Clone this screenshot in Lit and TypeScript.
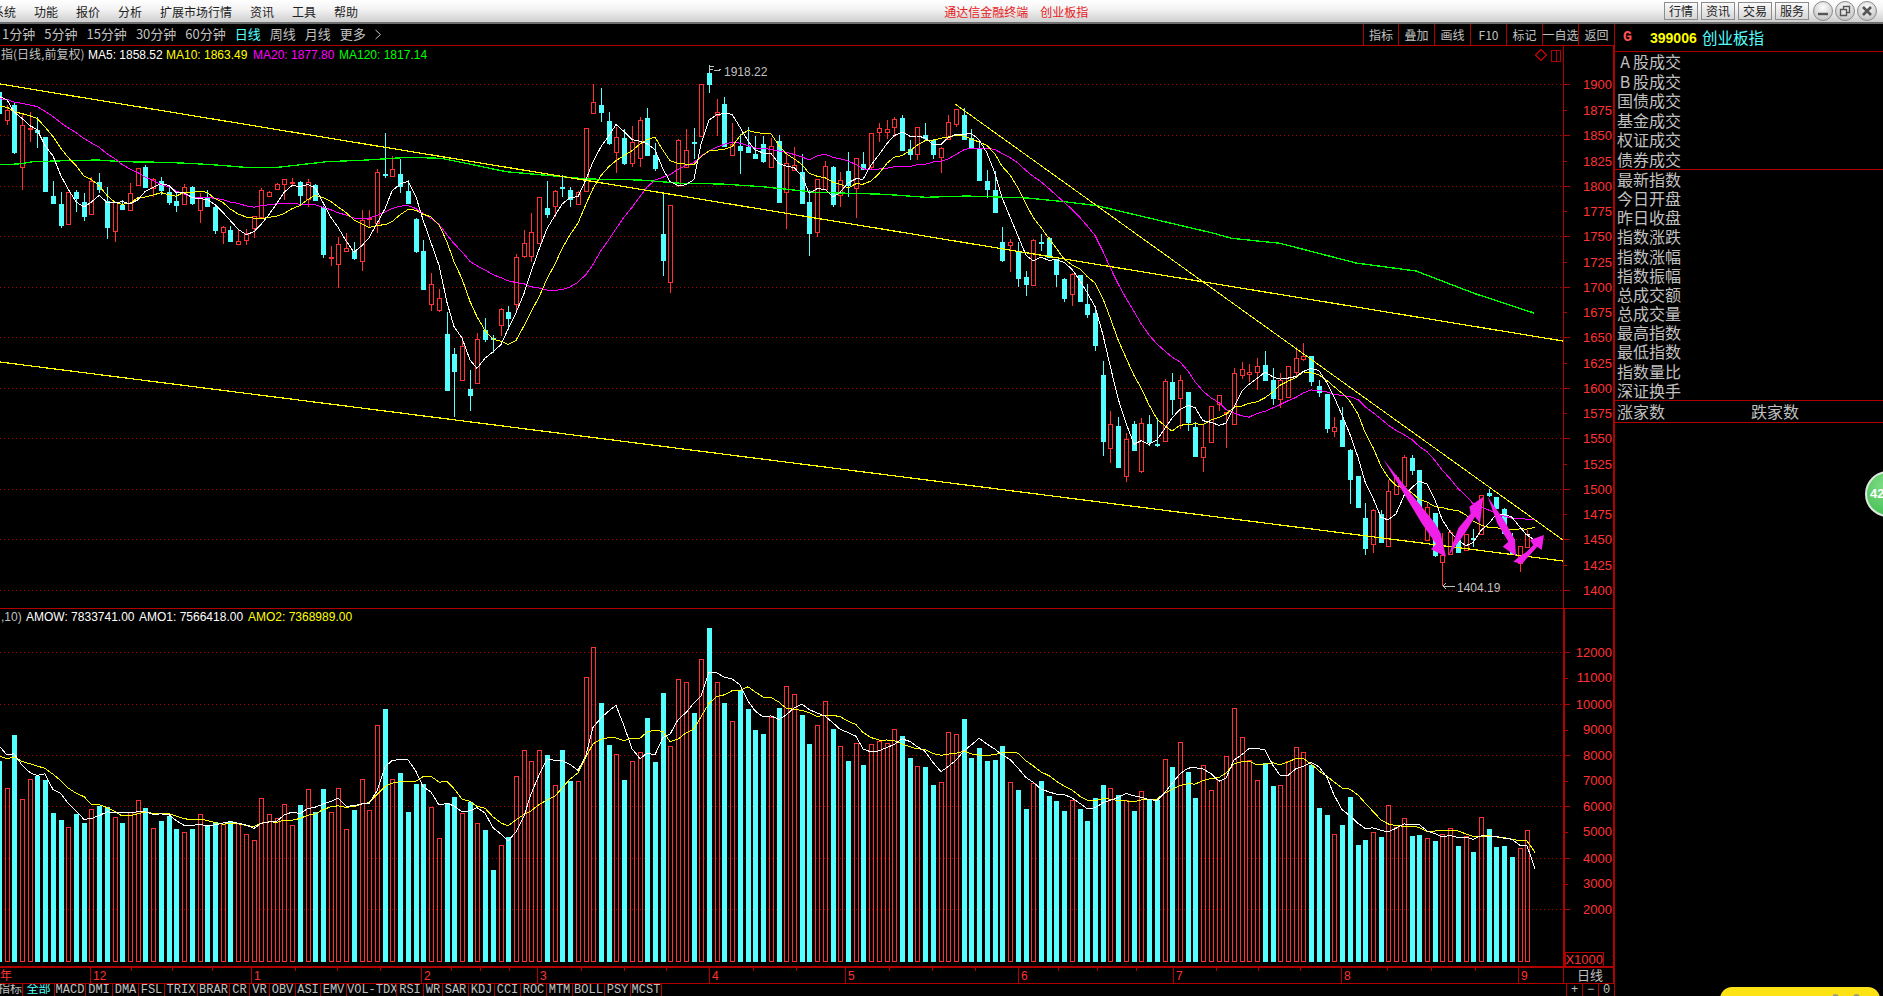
import { LitElement, css, html, svg } from "lit";
import { customElement } from "lit/decorators.js";

// candle rows read off the chart: [red?, bodyTop, bodyBottom, high, low], y*3 from each section's top
type Row = [number, number, number, number, number];
const SECTIONS: { top: number; rows: Row[] }[] = [
  {
    top: 80,
    rows: [
      [0,37,100,37,100],[1,90,120,75,135],[0,75,215,65,222],[1,135,260,100,330],[1,145,147,95,185],[0,150,156,110,205],[0,170,333,170,335],[0,348,369,303,369],[0,372,435,336,443],[1,337,434,337,434],[0,336,354,330,395],
      [0,366,408,340,422],[1,304,404,290,404],[0,306,328,280,340],[0,362,440,320,478],[1,365,452,365,485],[0,374,386,360,390],[1,340,392,310,392],[1,265,317,265,317],[0,261,320,255,320],[1,298,326,295,350],
      [0,304,332,290,345],[0,336,366,320,375],[0,362,374,340,395],[1,322,374,312,374],[0,321,368,318,375],[1,350,388,340,428],[0,352,378,330,380],[0,380,450,378,462],[1,441,455,438,492],[0,450,484,438,486],
      [1,484,494,450,494],[1,460,482,448,494],[1,408,443,408,474],[1,331,411,325,412],[1,335,347,333,350],[1,313,327,308,330],[1,298,314,296,360],[1,307,309,295,318],[0,307,345,303,375],[1,305,356,298,380],
      [0,315,360,312,360],[0,382,522,378,535],[1,530,531,498,558],[1,493,553,472,625],[1,505,515,458,515],[0,513,535,485,540],[1,420,542,390,572],[1,414,416,390,440],[1,277,430,268,460],[0,283,286,160,295],
      [1,268,290,228,290],[0,282,317,237,340],[0,333,370,300,370],[0,417,513,415,520],[0,513,627,480,627],[1,613,674,580,692],[1,655,690,628,695],[0,762,930,695,930],[0,822,874,805,1012],[1,798,900,770,900],
      [0,927,945,870,992],[1,778,911,760,911],[0,750,778,714,786],[0,774,778,765,820],[1,688,737,685,768],[0,697,714,678,750],[1,532,674,522,697],[1,490,530,450,535],[1,457,530,400,547],[1,350,488,350,490],
      [0,384,402,303,414],[1,332,376,330,410],[0,320,322,286,350],[0,331,358,320,380],[1,336,371,333,372],[1,145,335,145,335],[1,67,100,13,100],[0,75,95,25,125],[0,124,191,95,195],[1,170,215,140,278],
      [0,175,251,147,254],[1,187,250,138,262],[1,120,233,110,260],
    ],
  },
  {
    top: 60,
    rows: [
      [0,174,285,145,285],[0,285,324,250,332],[0,522,600,400,648],[1,436,668,436,698],[1,240,374,237,380],[1,270,320,208,325],[0,245,247,205,298],[1,72,228,72,228],[0,40,72,14,98],[1,157,167,118,228],
      [0,133,258,112,262],[1,253,285,190,285],[0,258,270,222,342],[0,260,274,202,276],[0,282,294,228,296],[0,252,304,228,308],[1,259,323,235,325],[0,243,425,225,425],[1,310,398,280,507],[1,316,332,262,332],
      [0,337,429,282,431],[0,426,518,390,587],[1,358,518,358,530],[1,318,386,303,390],[0,320,432,318,440],[1,361,407,335,440],[0,333,374,277,412],[1,295,386,295,473],[0,311,326,277,330],[1,220,322,220,328],
      [1,205,218,188,245],[1,207,215,180,238],[1,178,202,170,230],[0,174,270,165,270],[0,268,283,240,300],[1,202,284,202,300],[0,225,234,190,240],[0,240,282,238,296],[1,264,291,260,340],[1,187,238,165,238],
      [1,148,194,148,200],[0,165,236,143,238],[0,233,262,208,262],[0,268,362,250,362],[0,363,387,330,413],[0,390,456,332,456],[0,546,600,502,606],[1,547,556,537,637],[0,575,652,545,680],[0,651,673,632,708],
      [1,540,674,537,674],[0,546,548,522,572],[0,534,591,532,592],[0,598,644,596,682],[0,657,713,655,725],[1,643,704,640,738],[0,645,723,645,723],[0,732,762,672,774],[0,760,857,748,872],
    ],
  },
  {
    top: 320,
    rows: [
      [0,165,362,123,408],[1,313,386,272,430],[0,318,441,292,441],[1,357,467,340,485],[0,312,390,303,392],[1,310,453,295,458],[0,312,366,285,378],[0,373,374,295,380],[1,184,365,178,365],[0,186,236,160,285],
      [1,181,236,165,328],[0,217,306,217,332],[0,321,407,305,407],[1,381,410,315,456],[1,259,368,259,368],[1,226,254,226,272],[1,276,277,275,383],[1,160,314,145,314],[1,148,167,127,176],[1,155,160,133,187],
      [1,139,157,115,210],[0,135,180,93,180],[0,180,233,145,255],[1,180,236,160,265],[1,139,231,137,231],[1,115,158,80,175],[1,107,116,70,122],[0,108,183,108,197],[0,199,217,180,230],[0,222,323,222,340],
      [1,322,335,292,350],[0,300,378,262,378],[0,390,476,388,552],[0,468,561,468,561],[0,595,686,550,704],[1,571,673,568,700],[0,582,667,570,668],[1,514,680,480,680],[1,470,521,465,521],[1,412,498,405,498],
      [0,414,450,405,466],[0,450,570,450,570],[1,560,660,545,660],[0,578,705,578,710],[1,705,725,640,798],[1,637,703,630,705],[0,660,695,635,695],[1,643,691,643,691],[0,655,657,628,680],[1,526,643,526,643],
      [0,520,527,507,530],[0,532,565,532,565],[0,568,640,565,640],[0,658,700,640,700],[1,678,730,678,757],[1,643,682,630,682],
    ],
  },
];

// volume bar tops, same units (y*3 from 600)
const VOL_TOPS = [
  483,565,405,598,538,527,540,640,660,680,642,669,628,617,622,650,669,635,601,624,685,663,648,687,697,687,643,678,667,672,663,668,703,721,595,643,655,613,676,615,568,636,567,637,565,688,630,538,631,376,327,538,519,636,552,552,621,715,609,591,640,606,670,690,810,736,712,529,451,484,451,465,556,450,543,544,232,142,309,435,463,540,484,457,
  354,486,279,439,238,247,339,178,84,247,309,364,270,327,390,402,350,324,259,283,345,432,376,304,387,439,483,430,495,433,423,430,388,408,474,499,501,555,547,397,403,357,474,444,483,480,438,547,570,627,550,543,588,603,633,601,627,663,594,555,565,585,601,633,574,600,600,478,501,
  427,516,594,496,571,541,469,325,412,481,541,490,558,556,
  ...[244,202,217,255,384,405,463,435,351,495,480,457,471,376,440,415,468,465,475,483,463,445,498,468,516,412,447,501,498,531,505,451].map((v) => v + 240),
];

const STEP = 7.72;
const BASE_Y = 961;
const barX = (i: number) => Math.round(-1.22 + STEP * i);
const candles = SECTIONS.flatMap((s) =>
  s.rows.map(([red, t, b, h, l]) => ({
    red: !!red,
    top: s.top + t / 3,
    bottom: s.top + b / 3,
    high: s.top + h / 3,
    low: s.top + l / 3,
  }))
);
const volumes = VOL_TOPS.map((v) => 600 + v / 3);

// a moving average of pixel y is the average of the values, the axis is linear
function movingAverage(values: number[], n: number, seed: number) {
  return values
    .map((_, i) => {
      let sum = 0;
      for (let k = i - n + 1; k <= i; k++) sum += k < 0 ? seed : values[k];
      return `${barX(i)},${(sum / n).toFixed(1)}`;
    })
    .join(" ");
}

const closes = [...candles.map((c) => (c.red ? c.top : c.bottom)), 534];
const volLine = [...volumes, BASE_Y];

const z7 = (pts: number[][]) => pts.map(([x, y]) => `${(x / 2.45).toFixed(1)},${(80 + y / 3).toFixed(1)}`).join(" ");
const z8 = (pts: number[][]) => pts.map(([x, y]) => `${(640 + x / 2.45).toFixed(1)},${(60 + y / 3).toFixed(1)}`).join(" ");
const MA120 = [
  z7([[0,254],[45,252],[80,245],[160,242],[240,240],[300,245],[400,247],[460,250],[520,254],[600,262],[680,262],[730,255],[800,245],[900,240],[1000,232],[1080,235],[1150,252],[1240,275],[1350,287],[1440,297],[1568,300]]),
  z8([[100,370],[200,372],[300,380],[430,397],[600,403],[700,412],[800,408],[950,414],[1040,425],[1120,437],[1250,475],[1400,518],[1450,535],[1568,550]]),
  "1356,263 1416,271 1476,294 1534,313",
].join(" ");

const PRICE_GRID = [84, 135, 186, 236, 287, 337, 388, 438, 489, 539, 590];
const VOL_GRID = [652, 704, 755, 806, 858, 909];
const MONTHS: [string, number][] = [["12", 91], ["1", 252], ["2", 422], ["3", 538], ["4", 710], ["5", 846], ["6", 1019], ["7", 1174], ["8", 1342], ["9", 1519]];
const DATE_TICKS = [131, 172, 212, 295, 337, 380, 451, 480, 509, 581, 624, 666, 753, 796, 889, 932, 975, 1058, 1097, 1136, 1216, 1258, 1300, 1387, 1431, 1475];

// arrows are hand drawn on the picture, coordinates x*3/y*3 from (1060,320)
const ARROWS = [
  [[970,418],[1125,610],[1142,640],[1158,710],[1113,688],[1128,672],[1085,610]],
  [[1165,708],[1195,625],[1232,580],[1228,560],[1270,530],[1260,610],[1245,590],[1215,640]],
  [[1283,530],[1332,600],[1365,660],[1368,708],[1328,680],[1345,665],[1312,610]],
  [[1360,725],[1380,708],[1400,695],[1420,675],[1410,660],[1452,645],[1445,690],[1432,680],[1398,718],[1386,732]],
].map((a) => a.map(([x, y]) => `${(1060 + x / 3).toFixed(1)},${(320 + y / 3).toFixed(1)}`).join(" "));

const MENU = ["系统", "功能", "报价", "分析", "扩展市场行情", "资讯", "工具", "帮助"];
const PERIODS = ["1分钟", "5分钟", "15分钟", "30分钟", "60分钟", "日线", "周线", "月线", "更多"];
const TOOLS = ["指标", "叠加", "画线", "F10", "标记", "一自选", "返回"];
const TABS: [string, number][] = [["指标", 23], ["全部", 32], ["MACD", 31], ["DMI", 27], ["DMA", 26], ["FSL", 26], ["TRIX", 33], ["BRAR", 32], ["CR", 20], ["VR", 20], ["OBV", 26], ["ASI", 25], ["EMV", 26], ["VOL-TDX", 50], ["RSI", 27], ["WR", 19], ["SAR", 26], ["KDJ", 26], ["CCI", 26], ["ROC", 26], ["MTM", 26], ["BOLL", 32], ["PSY", 26], ["MCST", 31]];
const GROUP_A = ["股成交", "股成交", "国债成交", "基金成交", "权证成交", "债券成交"];
const GROUP_B = ["最新指数", "今日开盘", "昨日收盘", "指数涨跌", "指数涨幅", "指数振幅", "总成交额", "总成交量", "最高指数", "最低指数", "指数量比", "深证换手"];

@customElement("app-root")
export class AppRoot extends LitElement {
  static styles = css`
    :host {
      display: block;
      width: 100%;
      height: 996px;
      overflow: hidden;
      background: #000;
      color: #c0c0c0;
      font-family: "Liberation Sans", "Noto Sans CJK SC", sans-serif;
    }
    .titlebar {
      height: 22px;
      display: flex;
      align-items: center;
      background: linear-gradient(#fff, #f4f4f4 40%, #cfcfcf);
      border-bottom: 2px solid #6e6e6e;
      font-family: "Noto Sans CJK SC", sans-serif;
      font-size: 12px;
      color: #222;
    }
    .menu {
      display: flex;
      gap: 18px;
      margin-left: -8px;
      white-space: nowrap;
    }
    .brand {
      margin-left: 586px;
      display: flex;
      gap: 12px;
      color: #e8201c;
      white-space: nowrap;
    }
    .controls {
      margin-left: auto;
      margin-right: 6px;
      display: flex;
      align-items: center;
      gap: 3px;
    }
    .btn {
      box-sizing: border-box;
      width: 34px;
      height: 18px;
      border: 1px solid #8d8d8d;
      background: linear-gradient(#fafafa, #d6d6d6);
      font-size: 12px;
      line-height: 16px;
      text-align: center;
    }
    .rounds {
      display: flex;
      gap: 2px;
      margin-left: 1px;
    }
    .round {
      box-sizing: border-box;
      width: 20px;
      height: 20px;
      border-radius: 50%;
      border: 1px solid #8a8a8a;
      background: radial-gradient(circle at 50% 30%, #fdfdfd, #b9b9b9);
      display: flex;
      align-items: center;
      justify-content: center;
    }
    .round svg {
      width: 12px;
      height: 12px;
    }
    .body {
      display: grid;
      grid-template-columns: 1614px 1fr;
      height: 972px;
    }
    .left {
      display: flex;
      flex-direction: column;
      min-width: 0;
    }
    .toolbar {
      height: 21px;
      flex: none;
      display: flex;
      align-items: center;
      border-bottom: 1px solid #b00000;
      font-family: "Noto Sans CJK SC", sans-serif;
      font-size: 13px;
    }
    .periods {
      display: flex;
      gap: 9px;
      padding-left: 2px;
      white-space: nowrap;
    }
    .periods .on {
      color: #54ffff;
    }
    .tools {
      margin-left: auto;
      display: flex;
      height: 100%;
      font-size: 12px;
    }
    .tool {
      width: 35px;
      border-left: 1px solid #b00000;
      display: flex;
      align-items: center;
      justify-content: center;
      white-space: nowrap;
    }
    .chart {
      display: block;
      flex: none;
    }
    .tabs {
      height: 13px;
      flex: none;
      display: flex;
      overflow: hidden;
      font-family: "Liberation Mono", "Noto Sans CJK SC", monospace;
      font-size: 12px;
      line-height: 13px;
    }
    .tab {
      flex: none;
      box-sizing: border-box;
      border-right: 1px solid #b00000;
      text-align: center;
      white-space: nowrap;
      overflow: hidden;
    }
    .tab.on {
      color: #54ffff;
    }
    .tab.first {
      display: flex;
      justify-content: flex-end;
    }
    .tabs .gap {
      flex: 1;
    }
    .tiny {
      flex: none;
      box-sizing: border-box;
      width: 16px;
      border-left: 1px solid #b00000;
      text-align: center;
    }
    .right {
      position: relative;
      border-left: 1px solid #b00000;
      overflow: hidden;
      font-family: "Noto Sans CJK SC", sans-serif;
      font-size: 16px;
      line-height: 19px;
    }
    .head {
      height: 27px;
      display: flex;
      align-items: center;
      border-bottom: 1px solid #b00000;
      white-space: nowrap;
    }
    .head .g {
      margin-left: 8px;
      width: 27px;
      color: #ff5050;
      font: bold 15px "Liberation Mono", monospace;
    }
    .head .code {
      color: #ffff00;
      font: bold 14px "Liberation Sans", sans-serif;
      width: 52px;
    }
    .head .name {
      color: #54ffff;
      font-size: 15.5px;
    }
    .group {
      padding-left: 2px;
      border-bottom: 1px solid #b00000;
    }
    .row-a {
      height: 19.5px;
    }
    .row-b {
      height: 19.17px;
    }
    .row-a .latin {
      display: inline-block;
      width: 16px;
      text-align: center;
    }
    .breadth {
      height: 21px;
      display: grid;
      grid-template-columns: 134px 1fr;
      align-items: center;
      padding-left: 2px;
      border-bottom: 1px solid #b00000;
    }
    /* floating desktop widgets lying over the panel */
    .bubble {
      position: absolute;
      left: 250px;
      top: 447px;
      width: 46px;
      height: 46px;
      box-sizing: border-box;
      border: 2px solid #dfe8df;
      border-radius: 50%;
      background: radial-gradient(circle at 40% 30%, #7fdc84, #35b84a);
      color: #fff;
      font: bold 13px/42px "Liberation Sans", sans-serif;
      padding-left: 3px;
    }
    .pill {
      position: absolute;
      left: 105px;
      top: 963px;
      width: 160px;
      height: 30px;
      border-radius: 12px 12px 0 0;
      background: #fde314;
      overflow: hidden;
    }
    .pill i {
      position: absolute;
      top: 7px;
      width: 7px;
      height: 8px;
      border-radius: 50%;
      background: #9a9a8a;
    }
  `;

  private frame() {
    return svg`
      ${PRICE_GRID.concat(VOL_GRID).map((y) => svg`<line class="grid" x1="0" x2="1563" y1=${y + 0.5} y2=${y + 0.5}></line>`)}
      <path class="frame" d="M0 608.5H1614M1563.5 46V608M1613.5 46V984M0 983.5H1614M1563.5 984V967"></path>
      <path class="frame thick" d="M1564 608V967M0 967H1614"></path>
      <rect class="frame" x="1565.5" y="952.5" width="38" height="14"></rect>
      ${PRICE_GRID.flatMap((y, i) => {
        const next = i < PRICE_GRID.length - 1 ? (y + PRICE_GRID[i + 1]) / 2 : null;
        const price = 1900 - i * 50;
        return [
          svg`<path class="frame" d="M1563 ${y + 0.5}h7"></path><text class="axis" x="1612" y=${y + 5}>${price}</text>`,
          next === null
            ? null
            : svg`<path class="frame" d="M1563 ${Math.round(next) + 0.5}h4"></path><text class="axis" x="1612" y=${Math.round(next) + 5}>${price - 25}</text>`,
        ];
      })}
      ${VOL_GRID.flatMap((y, i) => {
        const v = 12000 - i * 2000;
        return [
          svg`<path class="frame" d="M1565 ${y + 0.5}h5"></path><text class="axis" x="1612" y=${y + 5}>${v}</text>`,
          i < 5
            ? svg`<path class="frame" d="M1565 ${y + 26}h3"></path><text class="axis" x="1612" y=${y + 30}>${v - 1000}</text>`
            : null,
        ];
      })}
      <text class="axis" x="1603" y="964">X1000</text>
      <path class="frame" d="M1541 49.5l5.5 5.5-5.5 5.5-5.5-5.5z"></path>
      <path class="frame" d="M1551.5 50.5h9v11h-9zM1556.5 50.5v11"></path>
      ${MONTHS.map(
        ([m, x]) => svg`<path class="frame" d="M${x - 0.5} 968V983"></path><text class="month" x=${x + 2} y="980">${m}</text>`
      )}
      <text class="month" x="0" y="980">年</text>
      ${DATE_TICKS.map((x) => svg`<path class="frame" d="M${x + 0.5} 968v3"></path>`)}
      <text class="cn" x="1577" y="980">日线</text>
    `;
  }

  private bars() {
    const parts = candles.map((c, i) => {
      const x = barX(i);
      const h = Math.max(Math.round(c.bottom - c.top), 1);
      const top = Math.round(c.top);
      const vol = Math.round(volumes[i]);
      if (c.red) {
        return svg`
          <path class="up" d="M${x + 0.5} ${Math.round(c.high)}V${top}M${x + 0.5} ${top + h}V${Math.round(c.low)}"></path>
          <rect class="up" x=${x - 1.5} y=${top + 0.5} width="4" height=${h}></rect>
          <rect class="up" x=${x - 1.5} y=${vol + 0.5} width="4" height=${BASE_Y - vol}></rect>`;
      }
      return svg`
        <path class="down" d="M${x + 0.5} ${Math.round(c.high)}V${Math.round(c.low)}"></path>
        <rect class="solid" x=${x - 2} y=${top} width="5" height=${h + 1}></rect>
        <rect class="solid" x=${x - 2} y=${vol} width="5" height=${BASE_Y - vol + 1}></rect>`;
    });
    return svg`${parts}
      <path class="white" d="M${barX(198) - 2} 534.5h5"></path>
      <path class="up" d="M${barX(198) - 2} 961.5h5"></path>`;
  }

  private lines() {
    return svg`
      <polyline class="ma g" points=${MA120}></polyline>
      <polyline class="ma m" points=${movingAverage(closes, 20, 98)}></polyline>
      <polyline class="ma y" points=${movingAverage(closes, 10, 106)}></polyline>
      <polyline class="ma w" points=${movingAverage(closes, 5, 92)}></polyline>
      <line class="ma y wide" x1="0" y1="84" x2="1563" y2="341"></line>
      <line class="ma y wide" x1="0" y1="362" x2="1563" y2="561"></line>
      <line class="ma y" x1="955" y1="104" x2="1563" y2="540"></line>
      <polyline class="ma y" points=${movingAverage(volLine, 10, 755)}></polyline>
      <polyline class="ma w" points=${movingAverage(volLine, 5, 742)}></polyline>
      ${ARROWS.map((p) => svg`<polygon class="arrow" points=${p}></polygon>`)}
      <path class="note" d="M709 66v6M709 66h5M709 69h4M714 70l4 1 3-2"></path>
      <text class="label" x="724" y="76">1918.22</text>
      <path class="note" d="M1443 586l3-3M1443 586l3 3M1443 586H1455"></path>
      <text class="label" x="1457" y="592">1404.19</text>
      <text class="legend" y="59">
        <tspan x="1" font-family="Noto Sans CJK SC">指(日线,前复权)</tspan>
        <tspan x="88" fill="#fff">MA5: 1858.52</tspan>
        <tspan x="166" fill="#ffff00">MA10: 1863.49</tspan>
        <tspan x="253" fill="#ff00ff">MA20: 1877.80</tspan>
        <tspan x="339" fill="#00ff00">MA120: 1817.14</tspan>
      </text>
      <text class="legend" y="621">
        <tspan x="1">,10)</tspan>
        <tspan x="26" fill="#fff">AMOW: 7833741.00</tspan>
        <tspan x="139" fill="#fff">AMO1: 7566418.00</tspan>
        <tspan x="248" fill="#ffff00">AMO2: 7368989.00</tspan>
      </text>
    `;
  }

  render() {
    return html`
      <div class="titlebar">
        <div class="menu">${MENU.map((m) => html`<span>${m}</span>`)}</div>
        <div class="brand"><span>通达信金融终端</span><span>创业板指</span></div>
        <div class="controls">
          ${["行情", "资讯", "交易", "服务"].map((b) => html`<div class="btn">${b}</div>`)}
          <div class="rounds">
            <div class="round"><svg viewBox="0 0 12 12"><path d="M1 9h10" stroke="#555" stroke-width="2.4"></path></svg></div>
            <div class="round">
              <svg viewBox="0 0 12 12" fill="none" stroke="#555" stroke-width="1.4"><path d="M1.5 4.5h6v6h-6zM4.5 4.5v-3h6v6h-3"></path></svg>
            </div>
            <div class="round"><svg viewBox="0 0 12 12"><path d="M2 2l8 8M10 2l-8 8" stroke="#555" stroke-width="2.6"></path></svg></div>
          </div>
        </div>
      </div>
      <div class="body">
        <div class="left">
          <div class="toolbar">
            <div class="periods">
              ${PERIODS.map((p) => html`<span class=${p === "日线" ? "on" : ""}>${p}</span>`)}
              <svg width="6" height="21" viewBox="0 0 6 21" fill="none" stroke="#c0c0c0"><path d="M.5 6l5 4.5-5 4.5"></path></svg>
            </div>
            <div class="tools">
              ${TOOLS.map((t) => html`<div class="tool" style="width:${t === "指标" ? 34 : 35}px">${t}</div>`)}
            </div>
          </div>
          <svg class="chart" width="1614" height="938" viewBox="0 46 1614 938">
            <style>
              .grid { stroke: #a80000; stroke-dasharray: 1 3; shape-rendering: crispEdges; }
              .frame { stroke: #b00000; fill: none; shape-rendering: crispEdges; }
              .thick { stroke-width: 2; }
              .axis { fill: #ff3232; font: 13px "Liberation Sans", sans-serif; text-anchor: end; }
              .month { fill: #ff3232; font: 12px "Liberation Sans", "Noto Sans CJK SC", sans-serif; }
              .cn { fill: #c0c0c0; font: 13px "Noto Sans CJK SC", sans-serif; }
              .up { stroke: #ff3232; fill: none; shape-rendering: crispEdges; }
              .down { stroke: #54ffff; shape-rendering: crispEdges; }
              .solid { fill: #54ffff; shape-rendering: crispEdges; }
              .white { stroke: #fff; shape-rendering: crispEdges; }
              .ma { fill: none; shape-rendering: crispEdges; }
              .ma.w { stroke: #fff; }
              .ma.y { stroke: #ffff00; }
              .ma.m { stroke: #ff00ff; }
              .ma.g { stroke: #00ff00; stroke-width: 1.3; }
              .ma.wide { stroke-width: 1.2; }
              .arrow { fill: #f020e8; }
              .note { stroke: #c0c0c0; fill: none; shape-rendering: crispEdges; }
              .label { fill: #c0c0c0; font: 12px "Liberation Sans", sans-serif; }
              .legend { fill: #c0c0c0; font: 12px "Liberation Sans", "Noto Sans CJK SC", sans-serif; }
            </style>
            ${this.frame()} ${this.bars()} ${this.lines()}
          </svg>
          <div class="tabs">
            ${TABS.map(
              ([t, w], i) => html`<div class="tab ${i === 1 ? "on" : ""} ${i === 0 ? "first" : ""}" style="width:${w}px">${t}</div>`
            )}
            <div class="gap"></div>
            <div class="tiny">+</div>
            <div class="tiny">−</div>
            <div class="tiny">0</div>
          </div>
        </div>
        <div class="right">
          <div class="head">
            <span class="g">G</span><span class="code">399006</span><span class="name">创业板指</span>
          </div>
          <div class="group">
            ${GROUP_A.map(
              (r, i) => html`<div class="row-a">${i < 2 ? html`<span class="latin">${"AB"[i]}</span>` : ""}${r}</div>`
            )}
          </div>
          <div class="group">${GROUP_B.map((r) => html`<div class="row-b">${r}</div>`)}</div>
          <div class="breadth"><span>涨家数</span><span>跌家数</span></div>
          <div class="bubble">42</div>
          <div class="pill"><i style="left:112px"></i><i style="left:133px"></i></div>
        </div>
      </div>
    `;
  }
}
